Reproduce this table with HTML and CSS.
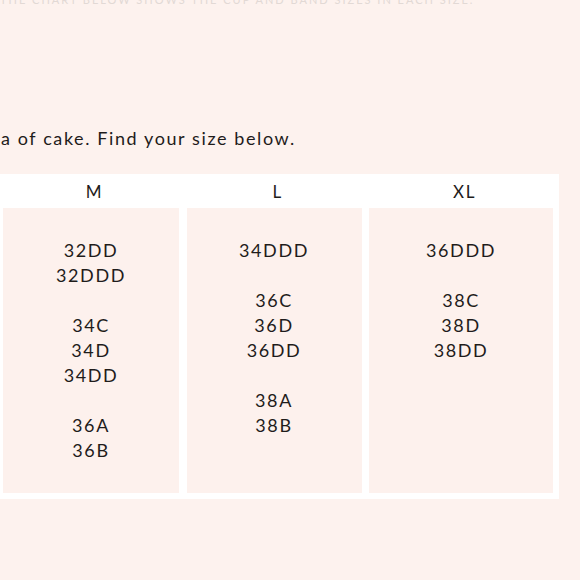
FILE: index.html
```html
<!DOCTYPE html>
<html>
<head>
<meta charset="utf-8">
<link rel="stylesheet" href="styles.css">
</head>
<body>
<div class="page">
  <div class="top-note">THE CHART BELOW SHOWS THE CUP AND BAND SIZES IN EACH SIZE.</div>
  <p class="intro">a of cake. Find your size below.</p>
  <div class="chart">
    <div class="head">M</div>
    <div class="head">L</div>
    <div class="head">XL</div>
    <div class="cell">
      <span>32DD</span><span>32DDD</span><span class="gap"></span>
      <span>34C</span><span>34D</span><span>34DD</span><span class="gap"></span>
      <span>36A</span><span>36B</span>
    </div>
    <div class="cell">
      <span>34DDD</span><span class="gap"></span>
      <span>36C</span><span>36D</span><span>36DD</span><span class="gap"></span>
      <span>38A</span><span>38B</span>
    </div>
    <div class="cell">
      <span>36DDD</span><span class="gap"></span>
      <span>38C</span><span>38D</span><span>38DD</span>
    </div>
  </div>
</div>
</body>
</html>
```
FILE: styles.css
```css
html, body {
  margin: 0;
  padding: 0;
  background: #fdf2ee;
  overflow: hidden;
}
.page {
  width: 580px;
  height: 580px;
  font-family: Lato, "Liberation Sans", sans-serif;
  color: #1f1c1b;
}
.top-note {
  margin-top: -7px;
  height: 11px;
  font-size: 11px;
  letter-spacing: 2px;
  color: #e2d9d5;
  white-space: nowrap;
  overflow: hidden;
}
.intro {
  margin: 0;
  padding-top: 122px;
  font-size: 18px;
  letter-spacing: 1.6px;
  line-height: 24px;
  padding-left: 1px;
  white-space: nowrap;
}
.chart {
  margin-top: 24px;
  margin-left: -4px;
  width: 563px;
  box-sizing: border-box;
  background: #ffffff;
  padding: 0 6px 6px 7px;
  display: grid;
  grid-template-columns: 176px 175px 184px;
  column-gap: 7.5px;
}
.head {
  height: 34px;
  display: flex;
  align-items: center;
  justify-content: center;
  font-size: 17px;
  letter-spacing: 1.5px;
  padding-left: 7px;
}
.cell {
  background: #fdf1ed;
  height: 285px;
  box-sizing: border-box;
  padding-top: 30px;
  display: flex;
  flex-direction: column;
  align-items: center;
  font-size: 18px;
  letter-spacing: 1.6px;
  line-height: 25px;
}
.cell span {
  display: block;
  height: 25px;
}
```
